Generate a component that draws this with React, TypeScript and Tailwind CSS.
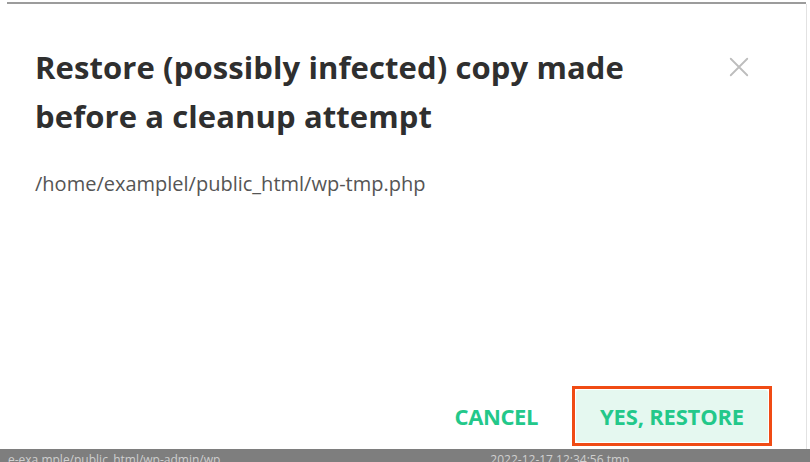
import React from 'react';

export default function App() {
  return (
    <div className="w-[810px] h-[462px] bg-white flex flex-col overflow-hidden font-['Open_Sans',sans-serif]">
      {/* top edge of the underlying window */}
      <div className="h-[2px] mt-[2px] ml-[7px] mr-[4px] bg-[#9c9c9c]" />

      <div className="flex-1 flex flex-col pl-[35px] pr-[40px] border-r border-[#e2e2e2] mr-[3px]">
        <div className="flex items-start justify-between pt-[39px]">
          <h2 className="text-[31px] font-bold leading-[49px] text-[#2f2f2f] w-[640px] tracking-[0.1px]">
            Restore (possibly infected) copy made before a cleanup attempt
          </h2>
          <button className="mt-[13px] mr-[16px] text-[#bdbdbd]" aria-label="Close">
            <svg className="w-[22px] h-[22px]" viewBox="0 0 24 24" fill="none" stroke="currentColor" strokeWidth="2" strokeLinecap="round">
              <path d="M3 3l18 18M21 3L3 21" />
            </svg>
          </button>
        </div>
        <p className="mt-[30px] text-[20px] leading-[26px] text-[#555555]">
          /home/examplel/public_html/wp-tmp.php
        </p>

        <div className="mt-auto mb-[3px] flex items-center justify-end gap-[34px] mr-[-6px]">
          <button className="text-[22px] font-bold text-[#23c88a] tracking-[-0.4px]">CANCEL</button>
          <div className="border-[3px] border-[#f04b14] p-[1px]">
            <button className="w-[192px] h-[52px] rounded-[3px] bg-[#e5f8f0] text-[22px] font-bold text-[#23c88a] tracking-[-0.2px]">
              YES, RESTORE
            </button>
          </div>
        </div>
      </div>

      {/* underlying table row, cut off */}
      <div className="h-[13px] bg-[#7e7e7e] flex items-start overflow-hidden text-[12px] leading-[12px] text-[#cfcfcf] pl-[8px] gap-[250px]">
        <span className="mt-[5px] whitespace-nowrap">e-exa mple/public_html/wp-admin/wp</span>
        <span className="mt-[5px] whitespace-nowrap ml-[20px]">2022-12-17 12:34:56 tmp</span>
      </div>
    </div>
  );
}
